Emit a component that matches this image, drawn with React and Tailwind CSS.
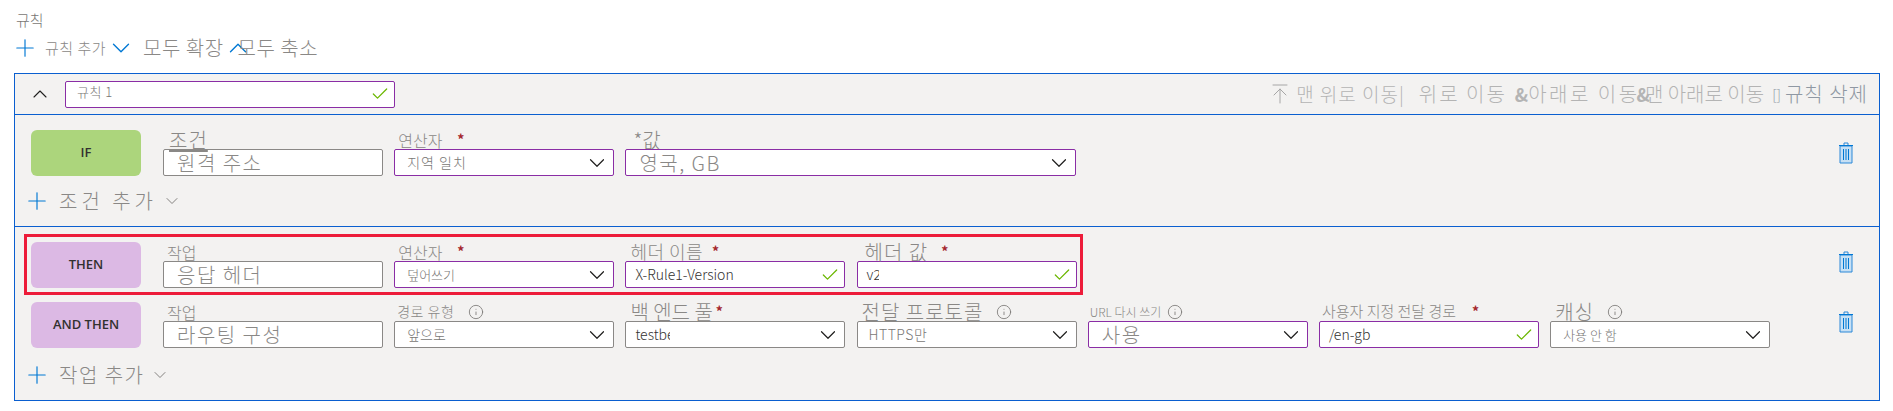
import { Plus, ChevronDown, ChevronUp, Check, Info, ArrowUpToLine } from "lucide-react";

const font = { fontFamily: '"Noto Sans CJK KR", "Noto Sans", sans-serif' };

function TrashIcon() {
  return (
    <svg width="14" height="22" viewBox="0 0 14 22" fill="none">
      <path d="M1 4h12v17H1z" fill="#c7e0f4" stroke="#2b88d8" strokeWidth="1" />
      <path d="M5 4V1h4v3" stroke="#2b88d8" strokeWidth="1" />
      <path d="M0 3.5h14M4.5 7v11M7 7v11M9.5 7v11" stroke="#0078d4" strokeWidth="1" />
    </svg>
  );
}

function Field({ label, labelClass = "text-[16px] pl-[4px]", required, info, value, valueClass = "text-[13px] pl-[12px]", purple, check, input, width = "w-[220px]", starClass = "ml-[15px]", infoClass = "ml-[13px]" }) {
  return (
    <div className={`${width} shrink-0`}>
      <div className="h-[19px] flex items-center whitespace-nowrap text-[#8a8886] font-light">
        <span className={labelClass}>{label}</span>
        {required && <span className={`text-[#a4262c] text-[14px] font-bold ${starClass}`}>*</span>}
        {info && <Info size={16} strokeWidth={1.25} className={`${infoClass} text-[#797775]`} />}
      </div>
      <div
        className={`h-[27px] bg-white border rounded-[2px] flex items-center justify-between overflow-hidden ${
          purple ? "border-[#8a2da5]" : "border-[#8a8886]"
        }`}
      >
        <span className={`whitespace-nowrap ${valueClass}`}>{value}</span>
        {check && <Check size={20} strokeWidth={1.5} className="mr-[4px] text-[#6bb700] shrink-0" />}
        {!check && !input && <ChevronDown size={26} strokeWidth={1.1} className="mr-[3px] text-[#201f1e] shrink-0" />}
      </div>
    </div>
  );
}

function Pill({ children, color }) {
  return (
    <div className={`w-[110px] h-[46px] rounded-[6px] mr-[22px] shrink-0 flex items-center justify-center text-[13px] font-semibold text-[#323130] ${color}`} style={{ fontFamily: '"Open Sans", sans-serif' }}>
      {children}
    </div>
  );
}

function AddRow({ label, className, textClass, chevronClass }) {
  return (
    <div className={`flex items-center ${className}`}>
      <Plus size={28} strokeWidth={1} className="text-[#0078d4]" />
      <span className={`ml-[8px] text-[20px] font-light text-[#8a8886] leading-none ${textClass}`}>{label}</span>
      <ChevronDown size={20} strokeWidth={1.1} className={`text-[#797775] ${chevronClass}`} />
    </div>
  );
}

const big = "text-[20px] tracking-[1.5px] font-light text-[#8a8886] pl-[13px] leading-[25px]";
const grayVal = "text-[14px] font-light text-[#797775] pl-[12px]";
const bigLabel = "text-[20px] tracking-[1px] pl-[5px]";
const smallLabel = "text-[14px] tracking-[0.5px] pl-[3px]";
const darkVal = "text-[14px] text-[#323130] pl-[9px]";

export default function App() {
  return (
    <div className="h-[411px] w-[1893px] bg-white pt-[11px] pl-[14px] overflow-hidden font-light" style={font}>
      <div className="pl-[2px] text-[15px] leading-[18px] text-[#797775]">규칙</div>
      <div className="mt-[8px] h-[22px] flex items-center text-[#8a8886] whitespace-nowrap">
        <Plus size={28} strokeWidth={1} className="-ml-[3px] text-[#0078d4]" />
        <span className="ml-[6px] text-[15px] tracking-[0.5px]">규칙 추가</span>
        <ChevronDown size={30} strokeWidth={1.1} className="ml-[0px] text-[#0078d4]" />
        <span className="ml-[7px] text-[20px] tracking-[0.5px]">모두 확장</span>
        <ChevronUp size={30} strokeWidth={1.1} className="-ml-[1px] text-[#0078d4]" />
        <span className="-ml-[15px] text-[20px] tracking-[0.5px]">모두 축소</span>
      </div>

      <div className="mt-[14px] w-[1866px] h-[328px] bg-[#f3f2f1] border border-[#0a5fd0]">
        <div className="h-[41px] border-b border-[#0a5fd0] flex items-center pl-[13px] pr-[11px]">
          <ChevronUp size={24} strokeWidth={1.1} className="text-[#201f1e]" />
          <div className="ml-[13px] w-[330px] h-[27px] bg-white border border-[#8a2da5] rounded-[2px] flex justify-between items-center">
            <span className="pl-[11px] text-[13px] tracking-[0.5px] text-[#797775] leading-none -mt-[6px]">규칙 1</span>
            <Check size={20} strokeWidth={1.5} className="mr-[4px] text-[#6bb700]" />
          </div>
          <div className="ml-auto flex items-center whitespace-nowrap text-[#b4b4b4]">
            <ArrowUpToLine size={24} strokeWidth={1} className="text-[#a6a6a6]" />
            <span className="ml-[4px] text-[19px] tracking-[1px]">맨 위로 이동|</span>
            <span className="ml-[14px] text-[20px] tracking-[2px]">위로 이동</span>
            <span className="ml-[8px] text-[18px] font-bold">&amp;</span>
            <span className="text-[20px] tracking-[2.5px]">아래로 이동</span>
            <span className="-ml-[3px] text-[18px] font-bold">&amp;</span>
            <span className="-ml-[5px] text-[20px]">맨 아래로 이동</span>
            <span className="ml-[8px] text-[14px] text-[#8f98a3]">[]</span>
            <span className="ml-[4px] text-[20px] tracking-[1px] text-[#8f98a3]">규칙 삭제</span>
          </div>
        </div>

        <div className="h-[112px] border-b border-[#0a5fd0] pt-[15px] pl-[16px]">
          <div className="flex items-start gap-[11.2px] pr-[26px]">
            <div className="-mr-[11.2px]">
              <Pill color="bg-[#acd57c]">IF</Pill>
            </div>
            <Field label="조건" labelClass="text-[20px] tracking-[1px] pl-[6px] underline underline-offset-2" value="원격 주소" valueClass={big} input />
            <Field label="연산자" required value="지역 일치" valueClass={`${grayVal} tracking-[1px]`} purple />
            <Field label="*값" labelClass="text-[20px] pl-[8px]" value="영국, GB" valueClass={big} purple width="w-[451px]" />
            <div className="ml-auto mt-[12px]">
              <TrashIcon />
            </div>
          </div>
          <AddRow label="조건 추가" className="mt-[11px] -ml-[8px]" textClass="tracking-[4px]" chevronClass="ml-[5px]" />
        </div>

        <div className="relative pt-[15px] pl-[16px]">
          <div className="absolute left-[9px] top-[7px] w-[1059px] h-[61px] border-[3px] border-[#ed1c3a]" />
          <div className="flex items-start gap-[11.2px] pr-[26px]">
            <div className="-mr-[11.2px]">
              <Pill color="bg-[#dcb9e4]">THEN</Pill>
            </div>
            <Field label="작업" value="응답 헤더" valueClass={big} input />
            <Field label="연산자" required value="덮어쓰기" valueClass="text-[13px] font-light text-[#797775] pl-[12px]" purple />
            <Field label="헤더 이름" labelClass="text-[18px] tracking-[0.5px] pl-[5px]" required starClass="ml-[9px]" value="X-Rule1-Version" valueClass={darkVal} purple check />
            <Field label="헤더 값" labelClass="text-[20px] tracking-[1px] pl-[8px]" required starClass="ml-[13px]" value="v2" valueClass="text-[14px] text-[#323130] pl-[9px] w-[21px] overflow-hidden" purple check />
            <div className="ml-auto mt-[9px]">
              <TrashIcon />
            </div>
          </div>

          <div className="mt-[14px] flex items-start gap-[11.2px] pr-[26px]">
            <div className="-mr-[11.2px]">
              <Pill color="bg-[#dcb9e4]">AND THEN</Pill>
            </div>
            <Field label="작업" value="라우팅 구성" valueClass={big} input />
            <Field label="경로 유형" labelClass={smallLabel} info infoClass="ml-[14px]" value="앞으로" valueClass={grayVal} />
            <Field label="백 엔드 풀" labelClass="text-[20px] pl-[5px]" required starClass="ml-[3px]" value="testbe" valueClass="text-[14px] text-[#323130] pl-[9px] w-[44px] overflow-hidden" />
            <Field label="전달 프로토콜" labelClass={bigLabel} info value="HTTPS만" valueClass="text-[14px] tracking-[0.5px] text-[#797775] pl-[11px]" />
            <Field label="URL 다시 쓰기" labelClass="text-[12px] pl-[2px]" info infoClass="ml-[6px]" value="사용" valueClass={big} purple />
            <Field label="사용자 지정 전달 경로" labelClass="text-[15px] pl-[3px]" required starClass="ml-[16px]" value="/en-gb" valueClass={darkVal} purple check />
            <Field label="캐싱" labelClass={bigLabel} info value="사용 안 함" valueClass="text-[13px] font-light text-[#797775] pl-[12px]" />
            <div className="ml-auto mt-[9px]">
              <TrashIcon />
            </div>
          </div>
          <AddRow label="작업 추가" className="mt-[13px] -ml-[8px]" textClass="tracking-[1.5px]" chevronClass="ml-[5px]" />
        </div>
      </div>
    </div>
  );
}
